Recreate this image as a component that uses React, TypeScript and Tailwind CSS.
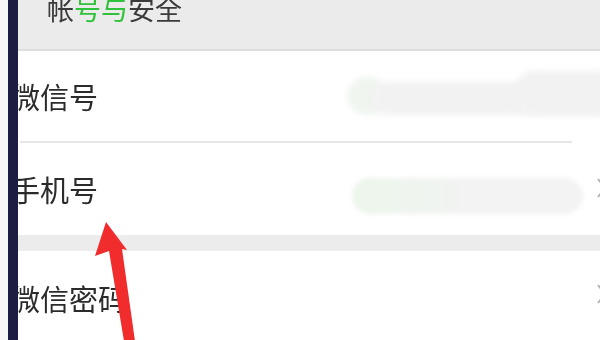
const font = { fontFamily: '"Noto Sans CJK SC", "Noto Sans", sans-serif' };

function Chevron({ top }: { top: number }) {
  return (
    <svg
      className="absolute left-[595px] h-[22px] w-[12px]"
      style={{ top }}
      viewBox="0 0 12 22"
      fill="none"
      stroke="#b4b4b4"
      strokeWidth="2"
    >
      <path d="M3 2l7 9-7 9" />
    </svg>
  );
}

export default function App() {
  return (
    <div className="relative h-[340px] w-[600px] overflow-hidden bg-white text-[#2b2b2b]" style={font}>
      <div className="flex flex-col">
        <div className="h-[51px] border-b-2 border-[#dddddd] bg-[#ebebeb] pl-[47px]">
          <div className="mt-[-5px] text-[27px] leading-none text-[#3a3a3a] blur-[0.4px]">
            帐<span className="text-[#2fc23a]">号与</span>安全
          </div>
        </div>

        <div className="relative flex h-[90px] items-center pl-[11px]">
          <span className="text-[29px] leading-none blur-[0.4px]">微信号</span>
          <div className="absolute left-[347px] top-[26px] h-[38px] w-[40px] rounded-full bg-[#f0f5f0] blur-[3px]" />
          <div className="absolute left-[372px] top-[31px] h-[33px] w-[240px] rounded-l-full bg-[#f2f2f2] blur-[3px]" />
          <div className="absolute left-[516px] top-[20px] h-[44px] w-[100px] rounded-2xl bg-[#f2f2f2] blur-[3px]" />
        </div>
        <div className="ml-[20px] mr-[28px] h-[2px] bg-[#e6e6e6]" />

        <div className="relative flex h-[92px] items-center pl-[11px]">
          <span className="text-[29px] leading-none blur-[0.4px]">手机号</span>
          <div className="absolute left-[352px] top-[35px] h-[36px] w-[231px] rounded-full bg-gradient-to-r from-[#ecf6eb] via-[#f2f3f2] to-[#f3f3f3] blur-[2px]" />
        </div>

        <div className="h-[16px] bg-[#ececec]" />

        <div className="relative flex h-[94px] items-center pl-[11px]">
          <span className="text-[29px] leading-none blur-[0.4px]">微信密码</span>
        </div>
      </div>

      <Chevron top={177} />
      <Chevron top={283} />

      <div className="absolute left-0 top-0 h-full w-[8px] bg-[#f7f7f7]" />
      <div className="absolute left-[8px] top-0 h-full w-[10px] bg-[#1d1d42]" />

      <svg className="absolute left-0 top-0 h-[340px] w-[600px]" viewBox="0 0 600 340">
        <polygon points="106,222 95,256 109,251 124,341 135,341 122,249 127,250" fill="#f02c2c" />
      </svg>
    </div>
  );
}
